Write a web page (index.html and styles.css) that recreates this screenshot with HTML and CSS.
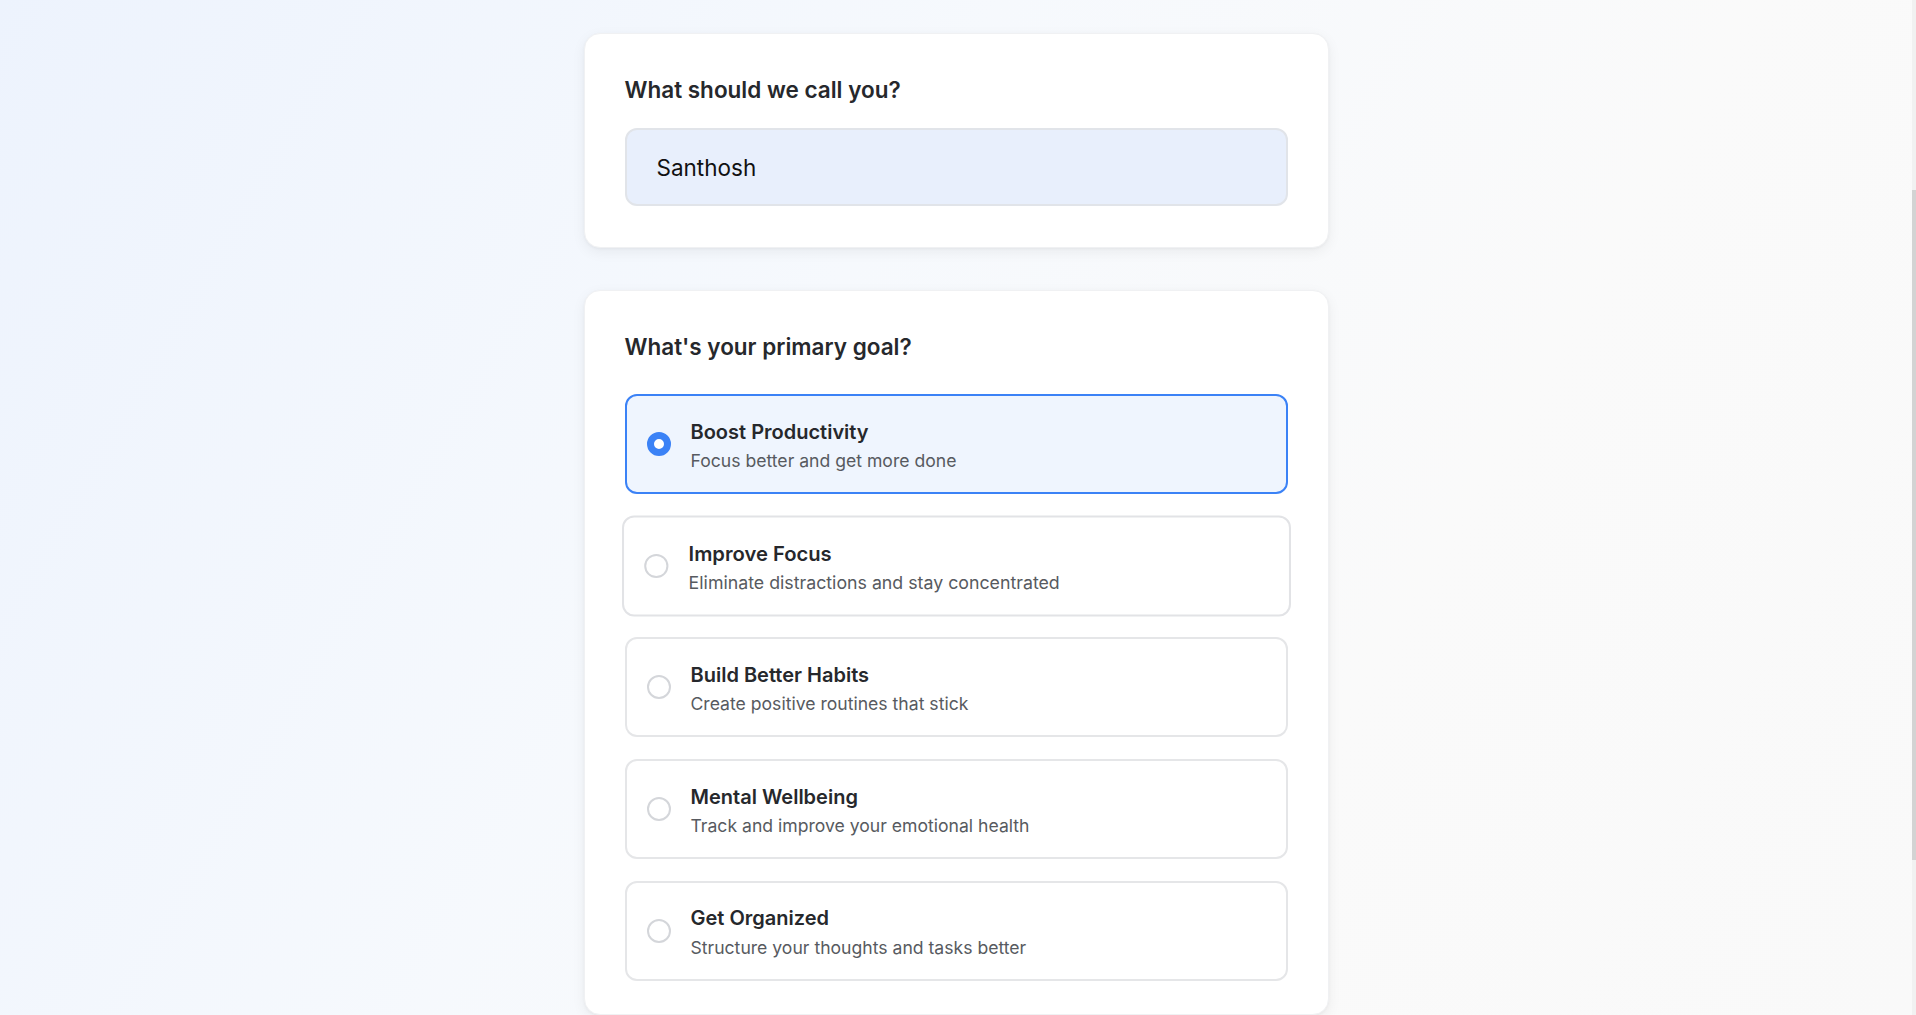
FILE: index.html
```html
<!DOCTYPE html>
<html lang="en">
<head>
<meta charset="utf-8">
<title>Onboarding</title>
<link rel="stylesheet" href="styles.css">
</head>
<body>
<main class="page">
  <section class="card card-name">
    <h2 class="card-title">What should we call you?</h2>
    <div class="name-input">Santhosh</div>
  </section>

  <section class="card card-goal">
    <h2 class="card-title goal-title">What's your primary goal?</h2>
    <div class="options">
      <div class="option selected">
        <span class="radio"></span>
        <div class="option-text">
          <div class="option-name">Boost Productivity</div>
          <div class="option-desc">Focus better and get more done</div>
        </div>
      </div>
      <div class="option hovered">
        <span class="radio"></span>
        <div class="option-text">
          <div class="option-name">Improve Focus</div>
          <div class="option-desc">Eliminate distractions and stay concentrated</div>
        </div>
      </div>
      <div class="option">
        <span class="radio"></span>
        <div class="option-text">
          <div class="option-name">Build Better Habits</div>
          <div class="option-desc">Create positive routines that stick</div>
        </div>
      </div>
      <div class="option">
        <span class="radio"></span>
        <div class="option-text">
          <div class="option-name">Mental Wellbeing</div>
          <div class="option-desc">Track and improve your emotional health</div>
        </div>
      </div>
      <div class="option">
        <span class="radio"></span>
        <div class="option-text">
          <div class="option-name">Get Organized</div>
          <div class="option-desc">Structure your thoughts and tasks better</div>
        </div>
      </div>
    </div>
  </section>
</main>
<div class="scrollbar"><div class="scrollbar-thumb"></div></div>
<script src="script.js"></script>
</body>
</html>
```

FILE: styles.css
```css
html {
  background: #f9fafb;
}
::-webkit-scrollbar {
  width: 0;
}
body {
  margin: 0;
  font-family: Inter, "Noto Sans", sans-serif;
  color: #1f2937;
  background: linear-gradient(120deg, #edf3fd 0%, #f6f9fd 40%, #fafafa 70%, #f9f9f9 100%) fixed;
  min-height: 100vh;
}
.page {
  display: flex;
  flex-direction: column;
  align-items: center;
  gap: 42px;
  padding: 318px 4px 235px 0;
}
.card {
  box-sizing: border-box;
  width: 745px;
  background: #ffffff;
  border: 1px solid #f0f1f3;
  border-radius: 16px;
  box-shadow: 0 4px 14px rgba(0, 0, 0, 0.06), 0 1px 3px rgba(0, 0, 0, 0.04);
  padding: 40px 40px 41px;
}
.card-goal {
  padding-bottom: 33px;
}
.card-title {
  margin: 0 0 22px;
  font-size: 22.5px;
  line-height: 32px;
  font-weight: 600;
  color: #26282c;
}
.goal-title {
  margin-bottom: 31px;
}
.name-input {
  box-sizing: border-box;
  height: 78px;
  display: flex;
  align-items: center;
  padding: 0 30px;
  background: #e8effc;
  border: 2px solid #e1e4e9;
  border-radius: 12px;
  font-size: 22.5px;
  color: #111111;
}
.options {
  display: flex;
  flex-direction: column;
  gap: 21.7px;
}
.option {
  box-sizing: border-box;
  height: 100px;
  display: flex;
  align-items: center;
  gap: 20px;
  padding: 0 20px;
  border: 2px solid #e5e6e8;
  border-radius: 12px;
  background: #ffffff;
}
.option.selected {
  border-color: #3b82f6;
  background: #eff5fe;
}
.option.hovered {
  transform: scale(1.009);
  border-color: #e2e3e6;
}
.radio {
  box-sizing: border-box;
  flex: none;
  width: 24px;
  height: 24px;
  border-radius: 50%;
  border: 2px solid #d4d6da;
  background: #ffffff;
}
.option.selected .radio {
  border: 7px solid #3b82f6;
}
.option-text {
  padding-top: 2.5px;
}
.option-name {
  font-size: 20px;
  line-height: 28px;
  font-weight: 600;
  color: #26282c;
}
.option-desc {
  margin-top: 3.5px;
  font-size: 17.6px;
  line-height: 24px;
  color: #575a60;
}
.scrollbar {
  position: fixed;
  top: 0;
  right: 0;
  width: 4px;
  height: 100vh;
  background: #f1f1f1;
}
.scrollbar-thumb {
  margin-top: 190px;
  height: 670px;
  background: #d3d3d3;
}
```

FILE: script.js
```js
window.scrollTo(0, 285);
```
